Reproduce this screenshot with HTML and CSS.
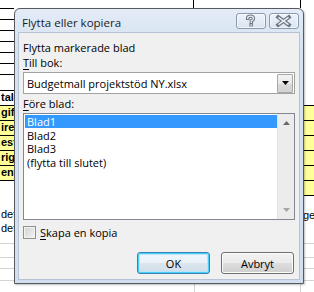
FILE: index.html
```html
<!DOCTYPE html>
<html>
<head>
<meta charset="utf-8">
<link rel="stylesheet" href="styles.css">
</head>
<body>
<div class="sheet">
  <div class="col col-left">
    <div class="row h8"></div>
    <div class="row line h11"></div>
    <div class="row line h11"></div>
    <div class="row line h11"></div>
    <div class="row line h11"></div>
    <div class="row line h11"></div>
    <div class="row line h11"></div>
    <div class="row line h16"></div>
    <div class="row line h15 cell bold">tala</div>
    <div class="row line h15 cell yellow bold">gifte</div>
    <div class="row line h15 cell yellow bold">ire</div>
    <div class="row line h15 cell yellow bold">est</div>
    <div class="row line h15 cell yellow bold">riga</div>
    <div class="row line h15 cell yellow bold">ent</div>
    <div class="row line h28"></div>
    <div class="row h13 cell">det</div>
    <div class="row h22 cell top">det</div>
    <div class="row gline h14"></div>
    <div class="row gline h11"></div>
    <div class="row gline h12"></div>
    <div class="row gline grow"></div>
  </div>
  <div class="col col-mid">
    <div class="mid-top"><div class="mid-top-cell"></div></div>
    <div class="grow"></div>
    <div class="mid-bottom"><div class="mid-bottom-cell"></div></div>
  </div>
  <div class="col col-right">
    <div class="row h8 vline"></div>
    <div class="row h97"></div>
    <div class="row line h15 yellow"></div>
    <div class="row line h15 yellow"></div>
    <div class="row line h15 yellow"></div>
    <div class="row line h15 yellow"></div>
    <div class="row line h15 yellow"></div>
    <div class="row line h15 yellow"></div>
    <div class="row line h48 cell right-txt">ge</div>
    <div class="row gline h14"></div>
    <div class="row gline h11"></div>
    <div class="row gline h12"></div>
    <div class="row gline grow gvline"></div>
  </div>
</div>

<div class="dialog">
  <div class="titlebar">
    <span class="title">Flytta eller kopiera</span>
    <div class="caps">
      <div class="cap">
        <svg width="30" height="16" viewBox="0 0 30 16">
          <path d="M12 5.2 Q12 3 15 3 Q18 3 18 5.3 Q18 7 15.8 7.8 L15.8 9.3" fill="none" stroke="#6d7684" stroke-width="3.4" stroke-linecap="square"/>
          <rect x="13.9" y="10.6" width="3.6" height="3" fill="#6d7684"/>
          <path d="M12 5.2 Q12 3 15 3 Q18 3 18 5.3 Q18 7 15.8 7.8 L15.8 9.3" fill="none" stroke="#e9edf3" stroke-width="1.3" stroke-linecap="square"/>
          <rect x="14.9" y="11.4" width="1.6" height="1.4" fill="#e9edf3"/>
        </svg>
      </div>
      <div class="cap">
        <svg width="30" height="16" viewBox="0 0 30 16">
          <path d="M9.5 4 L20.5 12 M20.5 4 L9.5 12" fill="none" stroke="#6d7684" stroke-width="4" stroke-linecap="square"/>
          <path d="M9.8 4.2 L20.2 11.8 M20.2 4.2 L9.8 11.8" fill="none" stroke="#e9edf3" stroke-width="1.6" stroke-linecap="butt"/>
        </svg>
      </div>
    </div>
  </div>
  <div class="client">
    <div class="lbl head">Flytta markerade blad</div>
    <div class="lbl"><u>T</u>ill bok:</div>
    <div class="combo">
      <span class="combo-text">Budgetmall projektstöd NY.xlsx</span>
      <div class="combo-btn">
        <svg width="7" height="4" viewBox="0 0 7 4"><path d="M0 0 H7 L3.5 4 Z" fill="#000"/></svg>
      </div>
    </div>
    <div class="lbl"><u>F</u>öre blad:</div>
    <div class="list">
      <div class="items">
        <div class="item sel">Blad1</div>
        <div class="item">Blad2</div>
        <div class="item">Blad3</div>
        <div class="item">(flytta till slutet)</div>
      </div>
      <div class="scroll">
        <svg width="7" height="4" viewBox="0 0 7 4"><path d="M0 4 H7 L3.5 0 Z" fill="#6a6a6a"/></svg>
        <svg width="7" height="4" viewBox="0 0 7 4"><path d="M0 0 H7 L3.5 4 Z" fill="#a6a6a6"/></svg>
      </div>
    </div>
    <div class="check">
      <span class="box"></span>
      <span><u>S</u>kapa en kopia</span>
    </div>
    <div class="buttons">
      <div class="btn def">OK</div>
      <div class="btn">Avbryt</div>
    </div>
  </div>
</div>
</body>
</html>
```

FILE: styles.css
```css
html, body {
  margin: 0;
  padding: 0;
}
body {
  width: 314px;
  height: 292px;
  overflow: hidden;
  position: relative;
  background: #ffffff;
  font-family: "Open Sans", "Noto Sans", sans-serif;
  font-size: 11px;
  color: #000;
}

/* background spreadsheet */
.sheet {
  display: flex;
  height: 292px;
}
.col {
  display: flex;
  flex-direction: column;
}
.col-left { width: 14px; }
.col-mid { width: 286px; }
.col-right { width: 14px; overflow: hidden; }
.row {
  box-sizing: border-box;
  flex: none;
}
.grow { flex: 1; }
.line { border-top: 1px solid #000; }
.gline { border-top: 1px solid #d4d4d4; }
.h8 { height: 8px; }
.h11 { height: 11px; }
.h12 { height: 12px; }
.h13 { height: 13px; }
.h14 { height: 14px; }
.h15 { height: 15px; }
.h16 { height: 16px; }
.h22 { height: 22px; }
.h28 { height: 28px; }
.h48 { height: 48px; }
.h97 { height: 97px; }
.yellow { background: #ffff99; }
.cell {
  font-family: "Liberation Sans", Arial, sans-serif;
  font-size: 11px;
  line-height: 13px;
  white-space: nowrap;
  padding-left: 1px;
}
.cell.top { line-height: 14px; }
.bold { font-weight: bold; }
.vline { border-left: 1px solid #000; }
.gvline { border-left: 1px solid #d4d4d4; }
.right-txt {
  padding-left: 3px;
  padding-top: 13px;
}
.mid-top { height: 8px; flex: none; }
.mid-top-cell {
  width: 180px;
  height: 8px;
  box-sizing: border-box;
  border-right: 1px solid #000;
}
.mid-bottom { height: 8px; flex: none; }
.mid-bottom-cell {
  width: 181px;
  height: 8px;
  box-sizing: border-box;
  border-right: 1px solid #d4d4d4;
}

/* dialog */
.dialog {
  position: absolute;
  left: 14px;
  top: 8px;
  width: 290px;
  height: 276px;
  box-sizing: border-box;
  border: 1px solid #555a61;
  border-radius: 6px 6px 0 0;
  background: linear-gradient(#e3ecf7, #d6e2f1 40px, #d3dfee);
  padding: 0 3px 3px 3px;
  display: flex;
  flex-direction: column;
  box-shadow: 1px 1px 2px rgba(0,0,0,0.25);
}
.titlebar {
  height: 23px;
  flex: none;
  display: flex;
  align-items: flex-start;
  justify-content: space-between;
}
.title {
  margin-top: 6px;
  padding-left: 4px;
  line-height: 15px;
  font-size: 11.5px;
  color: #1b1b1b;
}
.caps {
  display: flex;
  gap: 3px;
  margin-top: 4px;
  margin-right: 1px;
}
.cap {
  width: 30px;
  height: 16px;
  box-sizing: border-box;
  border: 1px solid #8a9ab0;
  border-radius: 3px;
  background: linear-gradient(#eef3f9, #dbe4ef);
  box-shadow: inset 0 0 0 1px rgba(255,255,255,0.6);
  display: flex;
  align-items: center;
  justify-content: center;
}
.cap svg { display: block; margin-left: -1px; margin-top: -1px; }

.client {
  flex: 1;
  box-sizing: border-box;
  border: 1px solid #b6c4d6;
  background: #f0f0f0;
  padding: 0 4px;
  display: flex;
  flex-direction: column;
}
.lbl {
  line-height: 15px;
  height: 15px;
  white-space: nowrap;
}
.lbl.head { margin-top: 7px; }
u { text-decoration-thickness: 1px; text-underline-offset: 2px; }

.combo {
  margin-top: 2px;
  height: 22px;
  box-sizing: border-box;
  border: 1px solid #a2a2a2;
  background: #fff;
  display: flex;
  align-items: center;
  justify-content: space-between;
  margin-bottom: 2px;
}
.combo-text {
  padding-left: 3px;
  white-space: nowrap;
}
.combo-btn {
  width: 16px;
  height: 19px;
  box-sizing: border-box;
  margin-right: 1px;
  border: 1px solid #a7a7a7;
  border-radius: 1px;
  background: linear-gradient(#f4f4f4, #e8e8e8 50%, #dadada 51%, #d2d2d2);
  display: flex;
  align-items: center;
  justify-content: center;
}
.combo-btn svg { display: block; }

.list {
  margin-top: 2px;
  height: 107px;
  box-sizing: border-box;
  border: 1px solid #828790;
  background: #fff;
  display: flex;
}
.items {
  flex: 1;
  padding: 1px 0 0 1px;
}
.item {
  height: 13.5px;
  line-height: 13.5px;
  padding-left: 2px;
  white-space: nowrap;
}
.item.sel {
  height: 13px;
  line-height: 13px;
  margin-bottom: 0.5px;
  background: #3399ff;
  color: #fff;
}
.scroll {
  width: 17px;
  flex: none;
  box-sizing: border-box;
  background: #ececec;
  border-left: 1px solid #e2e2e2;
  display: flex;
  flex-direction: column;
  justify-content: space-between;
  align-items: center;
  padding: 7px 0 7px 0;
}
.scroll svg { display: block; }

.check {
  margin-top: 5px;
  height: 15px;
  display: flex;
  align-items: center;
  gap: 4px;
  white-space: nowrap;
}
.box {
  width: 13px;
  height: 13px;
  box-sizing: border-box;
  border: 1px solid #8e8f8f;
  background: linear-gradient(135deg, #d2d2d2, #f4f4f4);
  box-shadow: inset 0 0 0 1px #f4f4f4;
  flex: none;
}

.buttons {
  margin-top: 12px;
  display: flex;
  justify-content: flex-end;
  gap: 11px;
  margin-right: 1px;
}
.btn {
  width: 73px;
  height: 22px;
  box-sizing: border-box;
  border: 1px solid #707070;
  border-radius: 3px;
  background: linear-gradient(#f2f2f2, #ebebeb 48%, #dddddd 52%, #cfcfcf);
  box-shadow: inset 0 0 0 1px #fbfbfb;
  display: flex;
  align-items: center;
  justify-content: center;
  line-height: 15px;
}
.btn.def {
  border-color: #3c7fb1;
  box-shadow: inset 0 0 0 1px #48d0f9, inset 0 0 0 2px #b7e6f9;
  background: linear-gradient(#f2f8fc, #e9f1f7 48%, #dae6ef 52%, #d0dde8);
}
```
